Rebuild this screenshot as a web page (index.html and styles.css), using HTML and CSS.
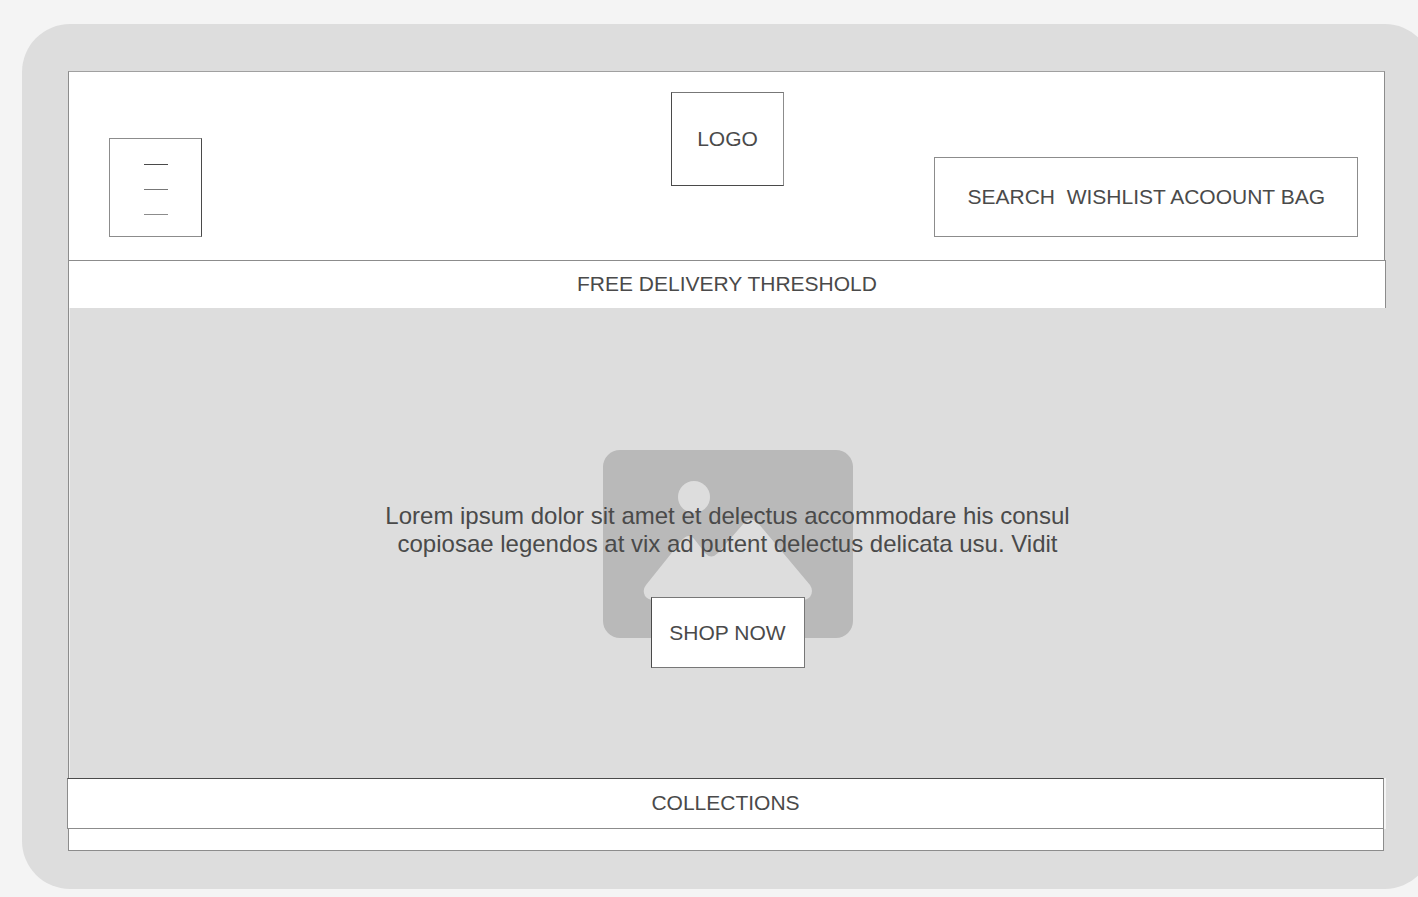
FILE: index.html
```html
<!DOCTYPE html>
<html lang="en">
<head>
<meta charset="utf-8">
<title>Store wireframe</title>
<link rel="stylesheet" href="styles.css">
</head>
<body>
<div class="device">
  <div class="screen">
    <header class="header">
      <button class="menu" type="button" aria-label="Menu">
        <span class="menu-line menu-line-dark"></span>
        <span class="menu-line"></span>
        <span class="menu-line menu-line-light"></span>
      </button>
      <a class="logo" href="#">LOGO</a>
      <nav class="account"><a href="#">SEARCH</a>  <a href="#">WISHLIST</a> <a href="#">ACOOUNT</a> <a href="#">BAG</a></nav>
    </header>
    <div class="promo">FREE DELIVERY THRESHOLD</div>
    <main class="hero">
      <svg class="hero-image" viewBox="0 0 250 188" aria-hidden="true">
        <rect width="250" height="188" rx="17" fill="#b9b9b9"/>
        <circle cx="91" cy="47" r="16" fill="#dddddd"/>
        <path fill="#dddddd" d="M43 135 L79 90 Q86 82 92 90 L102 103 Q108 110 115 103 L141 73 Q148 66 155 73 L207 135 Q211 141 207 147 Q204 150 199 150 L51 150 Q45 150 42 146 Q39 140 43 135 Z"/>
      </svg>
      <div class="hero-copy">
        <p class="hero-text">Lorem ipsum dolor sit amet et delectus accommodare his consul copiosae legendos at vix ad putent delectus delicata usu. Vidit</p>
        <button class="shop" type="button">SHOP NOW</button>
      </div>
    </main>
    <h2 class="collections">COLLECTIONS</h2>
    <div class="next-row"></div>
  </div>
</div>
</body>
</html>
```
FILE: styles.css
```css
* {
  box-sizing: border-box;
}

body {
  margin: 0;
  overflow: hidden;
  background: #f4f4f4;
  color: #4a4a4a;
  font-family: "Liberation Sans", Arial, sans-serif;
  font-size: 21px;
  line-height: 24px;
}

a {
  color: inherit;
  text-decoration: none;
}

button {
  padding: 0;
  color: inherit;
  font: inherit;
  background: #ffffff;
}

.device {
  margin: 24px -15px 8px 22px;
  padding: 47px 48px 38px 46px;
  border-radius: 48px;
  background: #dddddd;
}

.header {
  display: grid;
  grid-template-columns: 1fr auto 1fr;
  align-items: end;
  height: 189px;
  padding: 20px 0 23px 2px;
  border: 1px solid #8c8c8c;
  border-top-color: #a0a0a0;
  border-bottom: 0;
  background: #ffffff;
}

.menu {
  display: flex;
  flex-direction: column;
  align-items: center;
  justify-content: center;
  gap: 24px;
  width: 93px;
  height: 99px;
  margin-left: 38px;
  padding-top: 3px;
  border: 1px solid #8c8c8c;
  border-right-color: #4a4a4a;
}

.menu-line {
  width: 24px;
  height: 1px;
  background: #777777;
}

.menu-line-dark {
  background: #4a4a4a;
}

.menu-line-light {
  background: #8c8c8c;
}

.logo {
  display: grid;
  place-items: center;
  align-self: start;
  width: 113px;
  height: 94px;
  border: 1px solid #4a4a4a;
  border-top-color: #777777;
  border-right-color: #8c8c8c;
}

.account {
  justify-self: end;
  margin-right: 26px;
  padding: 27px 32px;
  border: 1px solid #8c8c8c;
  white-space: pre;
}

.promo {
  margin-right: -1px;
  padding: 11px 0 12px;
  border: 1px solid #8c8c8c;
  border-bottom: 0;
  background: #ffffff;
  text-align: center;
}

.hero {
  display: grid;
  justify-items: center;
  height: 470px;
  padding: 1px 0 0 1px;
  border-left: 1px solid #8c8c8c;
  box-shadow: inset 1px 0 #f0f0f0;
}

.hero-image {
  grid-area: 1 / 1;
  align-self: center;
  width: 250px;
  height: 188px;
}

.hero-copy {
  display: flex;
  flex-direction: column;
  align-items: center;
  grid-area: 1 / 1;
  gap: 39px;
  z-index: 1;
  padding-top: 193px;
}

.hero-text {
  max-width: 700px;
  margin: 0;
  font-size: 24px;
  line-height: 28px;
  text-align: center;
}

.shop {
  width: 154px;
  height: 71px;
  border: 1px solid #777777;
  border-left-color: #4a4a4a;
}

.collections {
  margin: 0 1px 0 -1px;
  padding: 12px 0 13px;
  border: 1px solid #8c8c8c;
  border-top-color: #4a4a4a;
  background: #ffffff;
  box-shadow: 2px 0 #f4f4f4;
  font-size: 21px;
  font-weight: 400;
  text-align: center;
}

.next-row {
  height: 22px;
  margin-right: 1px;
  border: 1px solid #8c8c8c;
  border-top: 0;
  background: #ffffff;
}
```
